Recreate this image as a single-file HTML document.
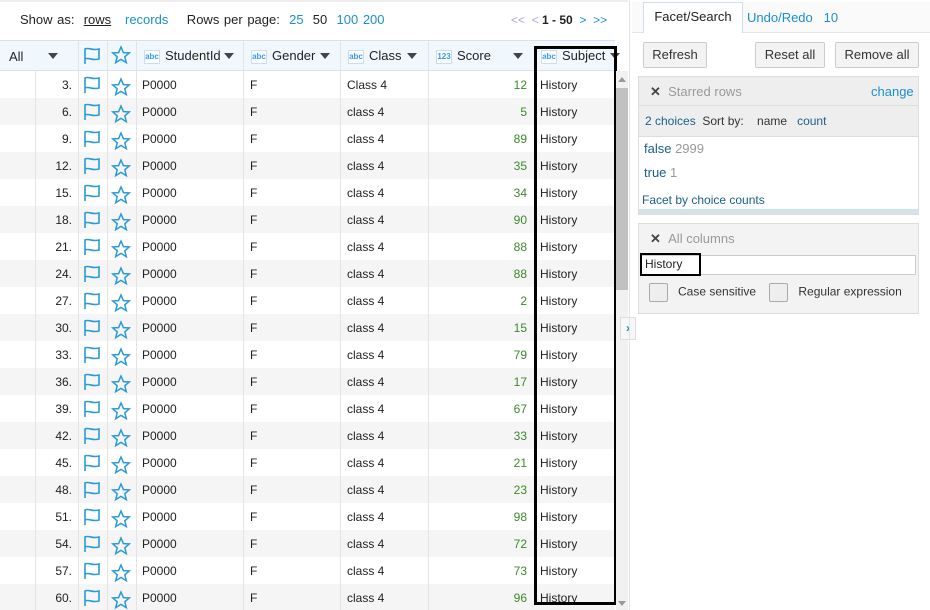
<!DOCTYPE html><html><head><style>
*{box-sizing:border-box;margin:0;padding:0}
html,body{width:930px;height:610px;overflow:hidden}
body{background:#fff;font-family:"Liberation Sans",sans-serif;font-size:12px;color:#222;position:relative}
.a{position:absolute}
.blue{color:#1a8fd0}
.hdr{top:40px;height:31px;left:0;width:615px;background:#f0f8fd;border-top:1px solid #dde;border-bottom:1px solid #dde}
.row{position:absolute;left:0;width:615px;height:27px}
.row.g{background:#f5f5f5}
.c{position:absolute;top:1px;height:27px;line-height:27px}
.vl{position:absolute;top:40px;width:1px;height:570px;background:#e4e4e4}
.abc{display:inline-block;width:16px;height:14px;border:1px solid #cde;background:#fff;font-size:8px;color:#39f;line-height:12px;text-align:center;font-weight:bold;vertical-align:middle;margin-right:5px}
.tri{position:absolute;width:0;height:0;border-left:5px solid transparent;border-right:5px solid transparent;border-top:6px solid #444}
.btn{position:absolute;height:26px;border:1px solid #ccc;background:#f3f3f3;line-height:24px;text-align:center;font-size:13px;color:#333;border-radius:2px}
.cb{display:inline-block;width:19px;height:19px;border:1px solid #aaa;background:#eee;border-radius:2px;vertical-align:middle}
</style></head><body>
<div class="a" style="left:0;top:0;width:628px;height:2px;background:#eee"></div>
<div class="a" style="left:20px;top:12px;font-size:13px;word-spacing:1px">Show as: &nbsp;<u>rows</u> &nbsp; <span class="blue">records</span> &nbsp;&nbsp;&nbsp;Rows per page: &nbsp;<span class="blue">25</span> &nbsp;50 &nbsp;<span class="blue">100</span> <span class="blue">200</span></div>
<div class="a" style="left:511px;top:13px;font-size:12px;color:#aac">&lt;&lt; &nbsp;&lt; <b style="color:#222">1 - 50</b> &nbsp;<span class="blue">&gt;</span> &nbsp;<span class="blue">&gt;&gt;</span></div>
<div class="a hdr"></div>
<div class="a" style="left:9px;top:49px;font-size:13px">All</div>
<div class="tri" style="left:48px;top:53px"></div>
<svg class="a" style="left:82px;top:46px" width="20" height="20" viewBox="0 0 20 20"><path d="M3 18V3c4-2 7 2 14 0v10c-7 2-10-2-14 0" fill="none" stroke="#2a9bd6" stroke-width="1.6"/></svg>
<svg class="a" style="left:111px;top:45px" width="20" height="20" viewBox="0 0 20 20"><polygon points="10,2 12.4,7.6 18.3,7.9 13.8,11.8 15.3,17.6 10,14.4 4.7,17.6 6.2,11.8 1.7,7.9 7.6,7.6" fill="none" stroke="#2a9bd6" stroke-width="1.5"/></svg>
<div class="a" style="left:144px;top:48px;font-size:13px"><span class="abc">abc</span>StudentId</div><div class="tri" style="left:224px;top:53px"></div>
<div class="a" style="left:251px;top:48px;font-size:13px"><span class="abc">abc</span>Gender</div><div class="tri" style="left:320px;top:53px"></div>
<div class="a" style="left:348px;top:48px;font-size:13px"><span class="abc">abc</span>Class</div><div class="tri" style="left:407px;top:53px"></div>
<div class="a" style="left:436px;top:48px;font-size:13px"><span class="abc">123</span>Score</div>
<div class="tri" style="left:513px;top:53px"></div>
<div class="a" style="left:541px;top:48px;font-size:13px"><span class="abc">abc</span>Subject</div><div class="tri" style="left:610px;top:53px"></div>
<div id="rows"></div>
<div class="vl" style="left:35px;top:71px;height:539px"></div><div class="vl" style="left:78px"></div><div class="vl" style="left:107px"></div><div class="vl" style="left:136px"></div><div class="vl" style="left:243px"></div><div class="vl" style="left:340px"></div><div class="vl" style="left:428px"></div>
<div class="a" style="left:534px;top:46px;width:83px;height:559px;border:3px solid #000"></div>
<div class="a" style="left:616px;top:71px;width:12px;height:539px;background:#f1f1f1"></div>
<div class="a" style="left:616px;top:88px;width:12px;height:202px;background:#c1c1c1"></div>
<div class="a" style="left:618px;top:77px;width:0;height:0;border-left:4px solid transparent;border-right:4px solid transparent;border-bottom:5px solid #999"></div>
<div class="a" style="left:618px;top:601px;width:0;height:0;border-left:4px solid transparent;border-right:4px solid transparent;border-top:5px solid #999"></div>
<div class="a" style="left:620px;top:317px;width:16px;height:23px;border:1px solid #ddd;background:#f7f7f7;color:#1a8fd0;font-weight:bold;text-align:center;line-height:20px">›</div>
<div class="a" style="left:629px;top:0;width:1px;height:610px;background:#e4e4e4"></div>
<div class="a" style="left:632px;top:2px;width:298px;height:31px;border-bottom:1px solid #e4e4e4;background:#fafafa"></div>
<div class="a" style="left:643px;top:2px;width:100px;height:31px;border:1px solid #cde;border-bottom:none;background:#fff;font-size:13px;line-height:28px;text-align:center">Facet/Search</div>
<div class="a blue" style="left:747px;top:10px;font-size:13px">Undo/Redo &nbsp;&nbsp;10</div>
<div class="btn" style="left:643px;top:42px;width:64px">Refresh</div>
<div class="btn" style="left:755px;top:42px;width:70px">Reset all</div>
<div class="btn" style="left:835px;top:42px;width:84px">Remove all</div>
<div class="a" style="left:638px;top:76px;width:281px;height:139px;border:1px solid #ddd;background:#fff"></div>
<div class="a" style="left:639px;top:77px;width:279px;height:29px;background:#eee;border-bottom:1px solid #ddd"></div>
<div class="a" style="left:650px;top:84px;font-size:13px;color:#999"><b style="color:#444">✕</b> &nbsp;Starred rows</div>
<div class="a blue" style="left:871px;top:84px;font-size:13px">change</div>
<div class="a" style="left:639px;top:106px;width:279px;height:31px;background:#eee;border-bottom:1px solid #ddd"></div>
<div class="a" style="left:645px;top:114px;font-size:12px;color:#1a5f8a">2 choices <span style="color:#333">&nbsp;Sort by: &nbsp;&nbsp;&nbsp;name</span> &nbsp;&nbsp;count</div>
<div class="a" style="left:644px;top:141px;font-size:13px;color:#1a5f8a">false <span style="color:#999">2999</span></div>
<div class="a" style="left:644px;top:165px;font-size:13px;color:#1a5f8a">true <span style="color:#999">1</span></div>
<div class="a" style="left:642px;top:193px;font-size:12px;color:#1a5f8a">Facet by choice counts</div>
<div class="a" style="left:639px;top:209px;width:279px;height:5px;background:#d4e2ea"></div>
<div class="a" style="left:638px;top:223px;width:281px;height:91px;border:1px solid #ddd;background:#f3f3f3"></div>
<div class="a" style="left:650px;top:231px;font-size:13px;color:#999"><b style="color:#444">✕</b> &nbsp;All columns</div>
<div class="a" style="left:641px;top:255px;width:275px;height:20px;border:1px solid #ccc;background:#fff"></div>
<div class="a" style="left:640px;top:253px;width:61px;height:23px;border:2px solid #000;font-size:12px;line-height:19px;padding-left:3px">History</div>
<div class="a" style="left:649px;top:283px;font-size:12px;color:#333"><span class="cb"></span> &nbsp;&nbsp;Case sensitive &nbsp;&nbsp;&nbsp;<span class="cb"></span> &nbsp;&nbsp;Regular expression</div>
<script>
var s=[12,5,89,35,34,90,88,88,2,15,79,17,67,33,21,23,98,72,73,96],h='';
var fl='<svg width="20" height="20" viewBox="0 0 20 20"><path d="M3 18V3c4-2 7 2 14 0v10c-7 2-10-2-14 0" fill="none" stroke="#2a9bd6" stroke-width="1.6"/></svg>';
var st='<svg width="20" height="20" viewBox="0 0 20 20"><polygon points="10,2 12.4,7.6 18.3,7.9 13.8,11.8 15.3,17.6 10,14.4 4.7,17.6 6.2,11.8 1.7,7.9 7.6,7.6" fill="none" stroke="#2a9bd6" stroke-width="1.5"/></svg>';
for(var i=0;i<20;i++){h+='<div class="row'+(i%2?' g':'')+'" style="top:'+(71+i*27)+'px">'+
'<div class="c" style="left:36px;width:36px;text-align:right">'+(3+i*3)+'.</div>'+
'<div class="c" style="left:82px;top:4px">'+fl+'</div><div class="c" style="left:111px;top:6px">'+st+'</div>'+
'<div class="c" style="left:142px">P0000</div><div class="c" style="left:250px">F</div>'+
'<div class="c" style="left:347px">'+(i?'class 4':'Class 4')+'</div>'+
'<div class="c" style="left:428px;width:99px;text-align:right;color:#3a8a2a">'+s[i]+'</div>'+
'<div class="c" style="left:540px">History</div></div>';}
document.getElementById('rows').innerHTML=h;
</script>
</body></html>
